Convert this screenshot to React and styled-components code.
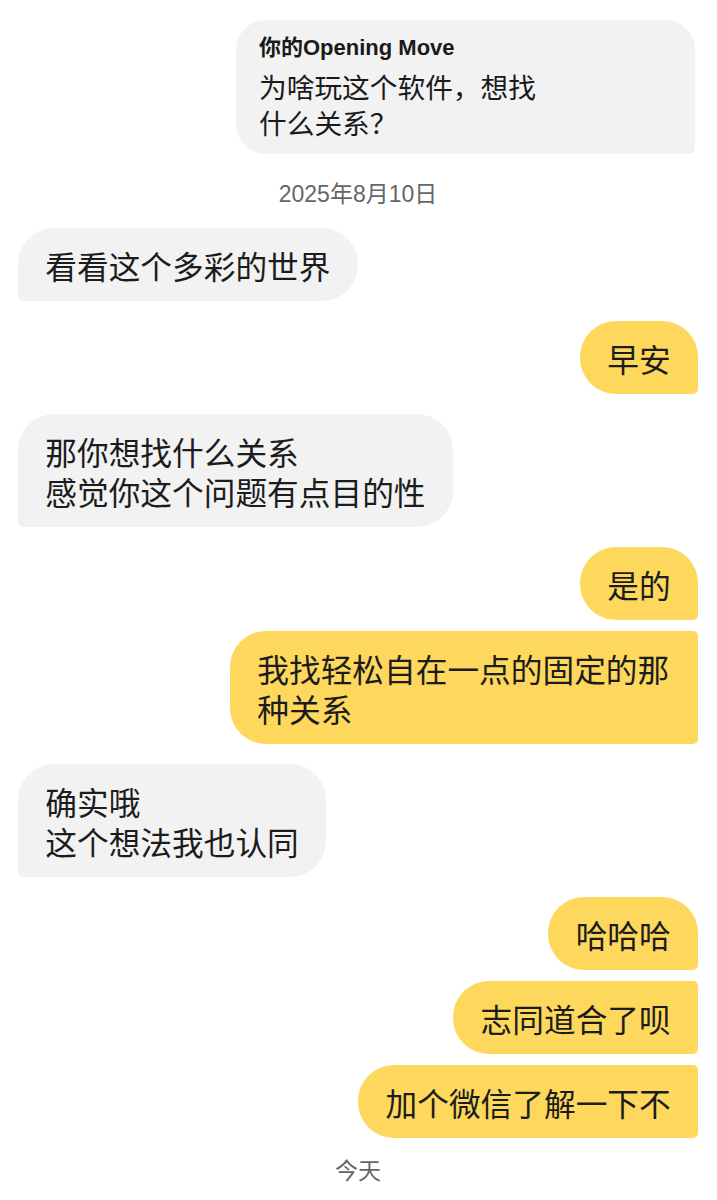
import React from "react";
import styled, { createGlobalStyle, css } from "styled-components";

const GlobalStyle = createGlobalStyle`
  html, body {
    margin: 0;
    padding: 0;
    background: #ffffff;
  }
  body {
    font-family: "Liberation Sans", "Noto Sans CJK SC", sans-serif;
    color: #1c1c1c;
  }
`;

const Page = styled.div`
  width: 717px;
  display: flex;
  flex-direction: column;
  padding: 20px 19px 0 18px;
  box-sizing: border-box;
`;

const OpeningCard = styled.div`
  align-self: flex-end;
  width: 459px;
  box-sizing: border-box;
  margin-right: 3px;
  padding: 14px 22px 14px 23px;
  background: #f2f2f2;
  border-radius: 30px 30px 5px 30px;
`;

const CardTitle = styled.div`
  font-size: 22px;
  line-height: 28px;
  font-weight: 700;
  color: #1a1a1a;
  margin-bottom: 6px;
`;

const CardBody = styled.div`
  font-family: "Noto Sans CJK SC", sans-serif;
  font-size: 27.7px;
  line-height: 36px;
  max-width: 290px;
  color: #1a1a1a;
`;

const Stamp = styled.div`
  text-align: center;
  font-size: 23px;
  line-height: 28px;
  color: #666666;
  margin: ${({ $top }) => $top}px 0 ${({ $bottom }) => $bottom}px;
`;

const Group = styled.div`
  display: flex;
  flex-direction: column;
  align-items: ${({ $mine }) => ($mine ? "flex-end" : "flex-start")};
  gap: 11px;
  margin-bottom: 20px;
`;

const R = 36;
const S = 5;

const Bubble = styled.div`
  max-width: 468px;
  box-sizing: border-box;
  padding: 16.5px 27.3px;
  font-family: "Noto Sans CJK SC", sans-serif;
  font-size: 31.7px;
  line-height: 40px;
  color: #1c1c1c;
  white-space: pre-line;
  ${({ $mine, $first }) =>
    $mine
      ? css`
          background: #fdd85c;
          border-radius: ${R}px ${$first ? R : S}px ${S}px ${R}px;
        `
      : css`
          background: #f2f2f2;
          border-radius: ${R}px ${R}px ${R}px ${S}px;
        `}
`;

const groups = [
  { mine: false, msgs: ["看看这个多彩的世界"] },
  { mine: true, msgs: ["早安"] },
  { mine: false, msgs: ["那你想找什么关系\n感觉你这个问题有点目的性"] },
  { mine: true, msgs: ["是的", "我找轻松自在一点的固定的那种关系"] },
  { mine: false, msgs: ["确实哦\n这个想法我也认同"] },
  { mine: true, msgs: ["哈哈哈", "志同道合了呗", "加个微信了解一下不"] },
];

export default function App() {
  return (
    <>
      <GlobalStyle />
      <Page>
        <OpeningCard>
          <CardTitle>你的Opening Move</CardTitle>
          <CardBody>为啥玩这个软件，想找什么关系？</CardBody>
        </OpeningCard>
        <Stamp $top={26} $bottom={20}>2025年8月10日</Stamp>
        {groups.map((g, i) => (
          <Group key={i} $mine={g.mine}>
            {g.msgs.map((m, j) => (
              <Bubble key={j} $mine={g.mine} $first={j === 0}>
                {m}
              </Bubble>
            ))}
          </Group>
        ))}
        <Stamp $top={-1} $bottom={0}>今天</Stamp>
      </Page>
    </>
  );
}
